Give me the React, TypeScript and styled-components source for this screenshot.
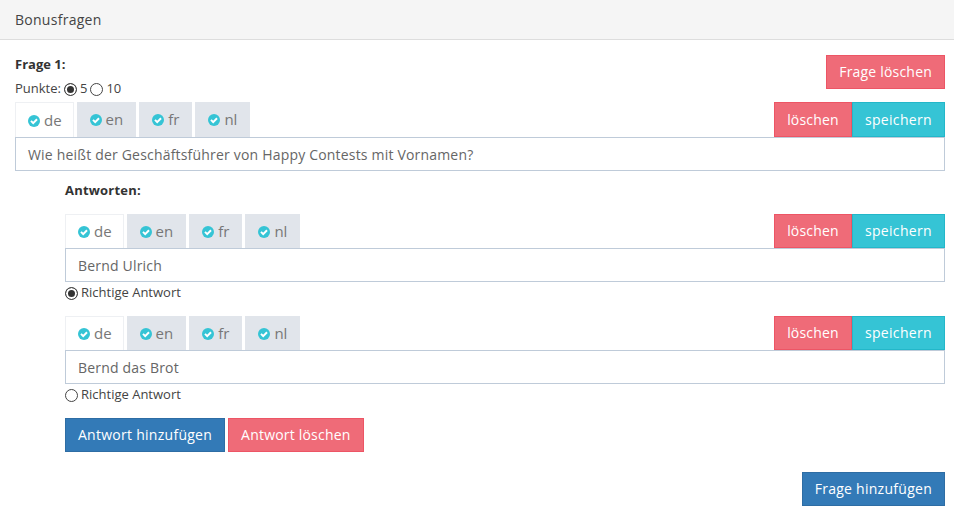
import React from "react";
import styled, { createGlobalStyle } from "styled-components";

const Global = createGlobalStyle`
  html, body { margin: 0; padding: 0; background: #fff; }
  body { font-family: "Open Sans", sans-serif; font-size: 13px; color: #333; }
`;
const Page = styled.div`width: 954px; height: 517px; overflow: hidden;`;
const Header = styled.div`
  height: 39px; background: #f5f5f5; border-bottom: 1px solid #ddd;
  padding-left: 15px; display: flex; align-items: center; font-size: 14px; letter-spacing: 0.27px; color: #444;
`;
const Body = styled.div`padding: 15px 9px 0 15px;`;
const QuestionHead = styled.div`display: flex; justify-content: space-between; align-items: flex-start; height: 47px;`;
const QuestionMeta = styled.div`display: flex; flex-direction: column;`;
const Title = styled.div`font-weight: 700; font-size: 13px; line-height: 18px; color: #333;`;
const RadioRow = styled.label`
  display: flex; align-items: center; font-size: 13px; line-height: 16px; color: #444; height: 16px;
`;
const PointsRow = styled(RadioRow)`margin-top: 7px;`;
const Mark = styled.span<{ $on?: boolean }>`
  width: 13px; height: 13px; border-radius: 50%; border: 1px solid #444; box-sizing: border-box;
  background: ${p => (p.$on ? "#333" : "#fff")};
  box-shadow: ${p => (p.$on ? "inset 0 0 0 2px #fff" : "none")};
  flex: none; margin: 2px 3px 0;
`;
const FirstMark = styled(Mark)`margin-left: 0;`;
const Button = styled.button<{ $kind: "danger" | "info" | "primary" }>`
  font-family: "Open Sans", sans-serif; font-size: 14px; line-height: 20px; color: #fff;
  letter-spacing: ${p => ({ danger: "0.2px", info: "0.33px", primary: "0.27px" }[p.$kind])};
  padding: 6px 12px; height: 34px; border-radius: 0; cursor: pointer; white-space: nowrap;
  border: 1px solid ${p => ({ danger: "#ed5565", info: "#23b7c9", primary: "#2e6da4" }[p.$kind])};
  background: ${p => ({ danger: "#ef6b78", info: "#35c4d5", primary: "#337ab7" }[p.$kind])};
`;
const TabBar = styled.div<{ $h: number }>`display: flex; justify-content: space-between; align-items: flex-end; height: ${p => p.$h}px;`;
const Tabs = styled.div`display: flex; gap: 3px; height: 100%;`;
const Tab = styled.div<{ $active?: boolean }>`
  height: 100%; box-sizing: border-box; display: flex; align-items: center; justify-content: center;
  gap: 4px; font-size: 15px; color: #777; padding: ${p => (p.$active ? "0 11px 1px 12px" : "0 13px 1px")};
  background: ${p => (p.$active ? "#fff" : "#e1e5eb")};
  border: ${p => (p.$active ? "1px solid #eef0f3" : "none")};
  border-bottom: none;
`;
const CheckIcon = styled.svg`width: 12px; height: 12px; flex: none; margin-top: 2px;`;
const Actions = styled.div`display: flex; height: 100%; & > button { height: 100%; }`;
const Field = styled.div`
  height: 34px; box-sizing: border-box; border: 1px solid #bfcbd9; background: #fff;
  display: flex; align-items: center; padding-left: 12px; font-size: 14px; letter-spacing: 0.19px; color: #666;
`;
const Answers = styled.div`padding-left: 50px;`;
const AnswersTitle = styled.div`font-weight: 700; font-size: 13px; letter-spacing: 0.2px; line-height: 18px; margin: 10px 0 15px; color: #333;`;
const AnswerBlock = styled.div`height: 102px;`;
const CorrectRow = styled(RadioRow)`margin-top: 2px;`;
const AnswerButtons = styled.div`display: flex; gap: 3px;`;
const Footer = styled.div`display: flex; justify-content: flex-end; margin-top: 20px;`;

const Check = () => (
  <CheckIcon viewBox="0 0 12 12" aria-hidden="true">
    <circle cx="6" cy="6" r="6" fill="#35c4d5" />
    <path d="M3 5.9 5.2 8.1 9 4.3" fill="none" stroke="#fff" strokeWidth="2" />
  </CheckIcon>
);

const LANGS = ["de", "en", "fr", "nl"];

function Editor({ text, barHeight }: { text: string; barHeight: number }) {
  return (
    <>
      <TabBar $h={barHeight}>
        <Tabs>
          {LANGS.map((l, i) => (
            <Tab key={l} $active={i === 0}><Check />{l}</Tab>
          ))}
        </Tabs>
        <Actions>
          <Button $kind="danger">löschen</Button>
          <Button $kind="info">speichern</Button>
        </Actions>
      </TabBar>
      <Field>{text}</Field>
    </>
  );
}

export default function App() {
  return (
    <Page>
      <Global />
      <Header>Bonusfragen</Header>
      <Body>
        <QuestionHead>
          <QuestionMeta>
            <Title>Frage 1:</Title>
            <PointsRow>Punkte:<Mark $on />5<Mark />10</PointsRow>
          </QuestionMeta>
          <Button $kind="danger">Frage löschen</Button>
        </QuestionHead>
        <Editor barHeight={35} text="Wie heißt der Geschäftsführer von Happy Contests mit Vornamen?" />
        <Answers>
          <AnswersTitle>Antworten:</AnswersTitle>
          <AnswerBlock>
            <Editor barHeight={34} text="Bernd Ulrich" />
            <CorrectRow><FirstMark $on />Richtige Antwort</CorrectRow>
          </AnswerBlock>
          <AnswerBlock>
            <Editor barHeight={34} text="Bernd das Brot" />
            <CorrectRow><FirstMark />Richtige Antwort</CorrectRow>
          </AnswerBlock>
          <AnswerButtons>
            <Button $kind="primary">Antwort hinzufügen</Button>
            <Button $kind="danger">Antwort löschen</Button>
          </AnswerButtons>
        </Answers>
        <Footer><Button $kind="primary">Frage hinzufügen</Button></Footer>
      </Body>
    </Page>
  );
}
